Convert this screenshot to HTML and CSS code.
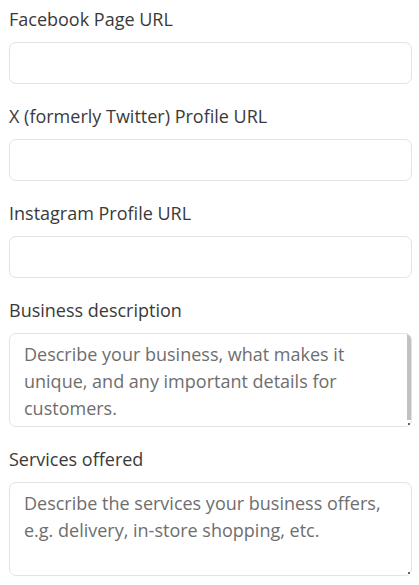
FILE: index.html
```html
<!DOCTYPE html>
<html lang="en">
<head>
<meta charset="utf-8">
<link rel="stylesheet" href="styles.css">
</head>
<body>
<form class="form">
  <div class="field">
    <label class="label" for="fb">Facebook Page URL</label>
    <input class="input" id="fb" type="url">
  </div>
  <div class="field">
    <label class="label" for="tw">X (formerly Twitter) Profile URL</label>
    <input class="input" id="tw" type="url">
  </div>
  <div class="field">
    <label class="label" for="ig">Instagram Profile URL</label>
    <input class="input" id="ig" type="url">
  </div>
  <div class="field">
    <label class="label" for="desc">Business description</label>
    <textarea class="textarea scroll" id="desc" placeholder="Describe your business, what makes it unique, and any important details for customers."></textarea>
  </div>
  <div class="field">
    <label class="label" for="svc">Services offered</label>
    <textarea class="textarea" id="svc" placeholder="Describe the services your business offers, e.g. delivery, in-store shopping, etc."></textarea>
  </div>
</form>
</body>
</html>
```
FILE: styles.css
```css
html, body {
  margin: 0;
  padding: 0;
  background: #ffffff;
}
body {
  font-family: "Open Sans", "Noto Sans", sans-serif;
  color: #333333;
}
.form {
  display: flex;
  flex-direction: column;
  gap: 19px;
  padding: 6px 7px 0 9px;
}
.field {
  display: flex;
  flex-direction: column;
  gap: 10px;
}
.label {
  font-size: 18px;
  line-height: 26px;
  color: #3a3a3a;
}
.input,
.textarea {
  box-sizing: border-box;
  width: 100%;
  border: 1px solid #e3e3e3;
  border-radius: 7px;
  background: #ffffff;
  font-family: "Open Sans", "Noto Sans", sans-serif;
  font-size: 18px;
  color: #333333;
  outline: none;
  margin: 0;
}
.input {
  height: 42px;
  padding: 0 14px;
}
.textarea {
  height: 94px;
  padding: 7px 18px 7px 14px;
  line-height: 27px;
  resize: vertical;
  display: block;
}
.textarea::placeholder {
  color: #6e6e6e;
}
.textarea::-webkit-scrollbar {
  width: 4px;
  height: 4px;
}
.textarea::-webkit-scrollbar-thumb {
  background: #c1c1c1;
}
.textarea::-webkit-scrollbar-track {
  background: transparent;
}
.textarea::-webkit-resizer {
  background: linear-gradient(#666666, #666666) no-repeat right 1px bottom 1px / 2px 2px;
}
.scroll {
  background: #ffffff linear-gradient(#c1c1c1, #c1c1c1) no-repeat right 0 top 0 / 4px 86px;
}
```
